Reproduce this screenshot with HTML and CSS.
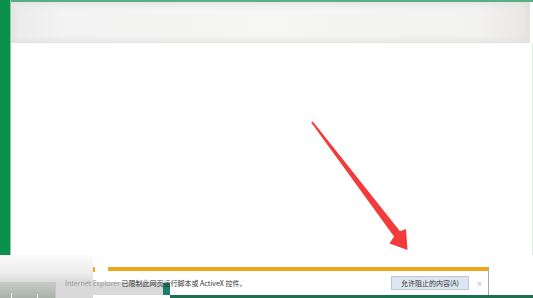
FILE: index.html
```html
<!DOCTYPE html>
<html lang="zh-CN">
<head>
<meta charset="utf-8">
<link rel="stylesheet" href="styles.css">
</head>
<body>
<div class="screen">
  <div class="upper">
    <div class="sidebar"></div>
    <div class="page">
      <div class="tabbar"></div>
      <div class="blank"></div>
    </div>
  </div>
  <div class="lower">
    <div class="tb-left">
      <div class="tb-a"></div>
      <div class="tb-b"></div>
    </div>
    <div class="notify">
      <span class="msg"><span class="brand">Internet Explorer </span>已限制此网页运行脚本或 ActiveX 控件。</span>
      <span class="btn">允许阻止的内容(A)</span>
      <span class="close">×</span>
    </div>
    <div class="rest"></div>
    <div class="greenline"></div>
  </div>
  <svg class="arrow" width="533" height="298" viewBox="0 0 533 298">
    <polygon points="311.2,122.6 312.8,121.4 400,231.2 406,229 407.5,250 389.5,243.5 394,236.6" fill="#f23b3b"/>
  </svg>
</div>
</body>
</html>
```
FILE: styles.css
```css
html, body {
  margin: 0;
  padding: 0;
  overflow: hidden;
  background: #ffffff;
}

.screen {
  position: relative;
  width: 533px;
  height: 298px;
  display: grid;
  grid-template-rows: 255px 43px;
  font-family: "Noto Sans CJK SC", "Noto Sans", sans-serif;
}

.upper {
  display: flex;
}

.sidebar {
  width: 11px;
  background: #0b904b;
  border-right: 1px solid #8cc9a8;
  box-sizing: border-box;
}

.page {
  flex: 1;
  display: flex;
  flex-direction: column;
  border-top: 2px solid #5aae85;
  background: #ffffff;
}

.tabbar {
  height: 41px;
  margin-right: 3px;
  background: linear-gradient(to right, #ebebeb, #f3f3f3 10%, #f6f6f4 50%, #f2f2f0 90%, #e9e7e2);
  box-shadow: inset 0 0 6px 2px #e0e0e0;
  border-right: 1px solid #e8e4dc;
}

.blank {
  flex: 1;
  border-right: 1px solid #d8efe4;
}

.lower {
  display: grid;
  grid-template-columns: 93px 396px 1fr;
  grid-template-rows: 40px 3px;
  background: #ffffff;
}

.tb-left {
  grid-row: 1 / 3;
  grid-column: 1;
  display: flex;
  background: linear-gradient(to bottom, #fbfbfb 0, #ededed 18px, #dcdcdc 26px);
}

.tb-a {
  width: 55px;
  margin-top: 27px;
  background:
    linear-gradient(#f4f4f4, #f4f4f4) 11px 100% / 1px 5px no-repeat,
    linear-gradient(#f4f4f4, #f4f4f4) 37px 100% / 1px 4px no-repeat,
    linear-gradient(to bottom, #c6cbc6, #aab1ab);
  border-right: 1px solid #c4c4c4;
}

.tb-b {
  flex: 1;
  margin-top: 27px;
  background: #d9d9d9;
}

.notify {
  grid-row: 1;
  grid-column: 2;
  margin-top: 12px;
  display: flex;
  align-items: center;
  padding-top: 4px;
  box-sizing: border-box;
  border-right: 1px solid #a8a8a8;
  background:
    linear-gradient(#f2a71b, #f2a71b) 15px 0 / 100% 4px no-repeat,
    linear-gradient(#f2a71b, #f2a71b) 0 0 / 2px 5px no-repeat,
    linear-gradient(#1b7d6c, #1b7d6c) 70px 100% / 7px 12px no-repeat,
    linear-gradient(#d9d9d9, #d9d9d9) 0 100% / 70px 13px no-repeat,
    #ffffff;
}

.msg {
  margin-left: -28px;
  font-size: 7px;
  color: #333333;
  white-space: nowrap;
  position: relative;
}

.brand {
  color: #9a9a9a;
}

.btn {
  margin-left: auto;
  width: 78px;
  height: 14px;
  box-sizing: border-box;
  display: flex;
  align-items: center;
  justify-content: center;
  font-size: 7px;
  color: #333333;
  background: #dde6f0;
  border: 1px solid #bcc8d4;
  white-space: nowrap;
}

.close {
  margin-left: 7px;
  margin-right: 5px;
  font-size: 7px;
  color: #9a9a9a;
}

.rest {
  grid-row: 1;
  grid-column: 3;
}

.greenline {
  grid-row: 2;
  grid-column: 2 / 4;
  margin-left: 77px;
  background: #1c7050;
}

.arrow {
  position: absolute;
  left: 0;
  top: 0;
  pointer-events: none;
}
```
